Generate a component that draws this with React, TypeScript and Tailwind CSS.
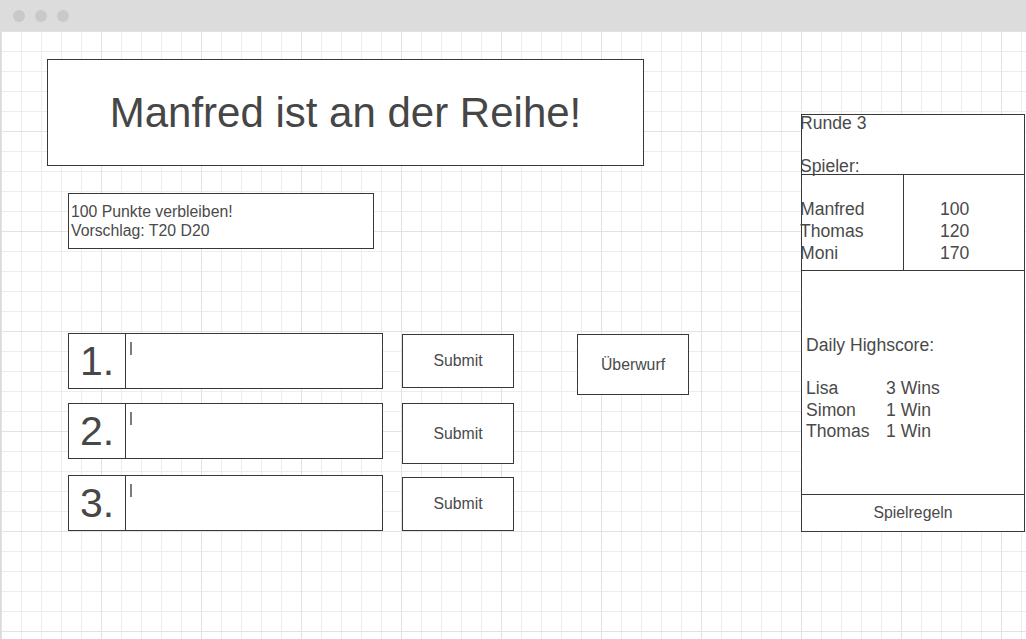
import React from "react";

const font = { fontFamily: '"Liberation Sans", Arial, sans-serif' };

function InputRow({ n, submitClass }: { n: string; submitClass: string }) {
  return (
    <>
      <div className="flex h-[56px] w-[315px] border border-[#383838] bg-white">
        <div className="flex h-full w-[57px] items-center justify-center border-r border-[#383838] text-[41px] leading-none text-[#474747]">
          {n}
        </div>
        <div className="flex-1 pl-[4px] pt-[8px]">
          <div className="h-[13px] w-[2px] bg-[#7c7c7c]" />
        </div>
      </div>
      <button
        className={`ml-[19px] flex w-[112px] items-center justify-center border border-[#383838] bg-white text-[15.8px] text-[#4a4a4a] ${submitClass}`}
      >
        Submit
      </button>
    </>
  );
}

export default function App() {
  return (
    <div className="h-[639px] w-[1026px] overflow-hidden bg-white text-[#4a4a4a]" style={font}>
      <div className="flex h-[31px] items-center gap-[10px] bg-[#dcdcdc] pl-[13px]">
        <div className="h-[12px] w-[12px] rounded-full bg-[#c9c9c9]" />
        <div className="h-[12px] w-[12px] rounded-full bg-[#c9c9c9]" />
        <div className="h-[12px] w-[12px] rounded-full bg-[#c9c9c9]" />
      </div>
      <div className="flex h-[608px] border-l border-[#dadada] bg-[linear-gradient(to_right,#e2e2e2_1px,transparent_1px),linear-gradient(to_bottom,#e2e2e2_1px,transparent_1px),linear-gradient(to_right,#ededed_1px,transparent_1px),linear-gradient(to_bottom,#ededed_1px,transparent_1px)] bg-[size:100px_100px,100px_100px,20px_20px,20px_20px] pl-[46px] pt-[28px]">
        {/* left column */}
        <div className="flex w-[642px] flex-col">
          <div className="flex h-[107px] w-[597px] items-center justify-center border border-[#383838] bg-white text-[42px] leading-none text-[#464646]">
            Manfred ist an der Reihe!
          </div>
          <div className="ml-[21px] mt-[27px] flex h-[56px] w-[306px] flex-col justify-center border border-[#383838] bg-white pl-[2px] text-[15.8px] leading-[19px] text-[#4a4a4a]">
            <div>100 Punkte verbleiben!</div>
            <div>Vorschlag: T20 D20</div>
          </div>
          <div className="ml-[21px] mt-[84px] flex flex-col">
            <div className="flex h-[70px] items-start">
              <InputRow n="1." submitClass="mt-[1px] h-[54px]" />
              <button className="ml-[63px] mt-[1px] flex h-[61px] w-[112px] items-center justify-center border border-[#383838] bg-white text-[15.8px] text-[#4a4a4a]">
                Überwurf
              </button>
            </div>
            <div className="flex h-[72px] items-start">
              <InputRow n="2." submitClass="h-[61px]" />
            </div>
            <div className="flex items-start">
              <InputRow n="3." submitClass="mt-[2px] h-[54px]" />
            </div>
          </div>
        </div>
        {/* right panel */}
        <div className="ml-[112px] mt-[55px] flex h-[418px] w-[224px] flex-col border border-[#383838] bg-white text-[17.6px] text-[#4a4a4a]">
          <div className="h-[60px] border-b border-[#383838]">
            <div className="ml-[-2px] mt-[-2px] leading-[21.5px]">
              <div>Runde 3</div>
              <div>&nbsp;</div>
              <div>Spieler:</div>
            </div>
          </div>
          <div className="flex h-[96px] border-b border-[#383838]">
            <div className="w-[102px] border-r border-[#383838] pt-[23px] leading-[22px]">
              <div className="ml-[-2px]">
                <div>Manfred</div>
                <div>Thomas</div>
                <div>Moni</div>
              </div>
            </div>
            <div className="pl-[36px] pt-[23px] leading-[22px]">
              <div>100</div>
              <div>120</div>
              <div>170</div>
            </div>
          </div>
          <div className="h-[224px] border-b border-[#383838] pl-[4px] pt-[64px] leading-[21.5px]">
            <div>Daily Highscore:</div>
            <div>&nbsp;</div>
            <div className="grid grid-cols-[80px_1fr]">
              <div>Lisa</div>
              <div>3 Wins</div>
              <div>Simon</div>
              <div>1 Win</div>
              <div>Thomas</div>
              <div>1 Win</div>
            </div>
          </div>
          <div className="flex flex-1 items-center justify-center text-[15.8px]">Spielregeln</div>
        </div>
      </div>
    </div>
  );
}
